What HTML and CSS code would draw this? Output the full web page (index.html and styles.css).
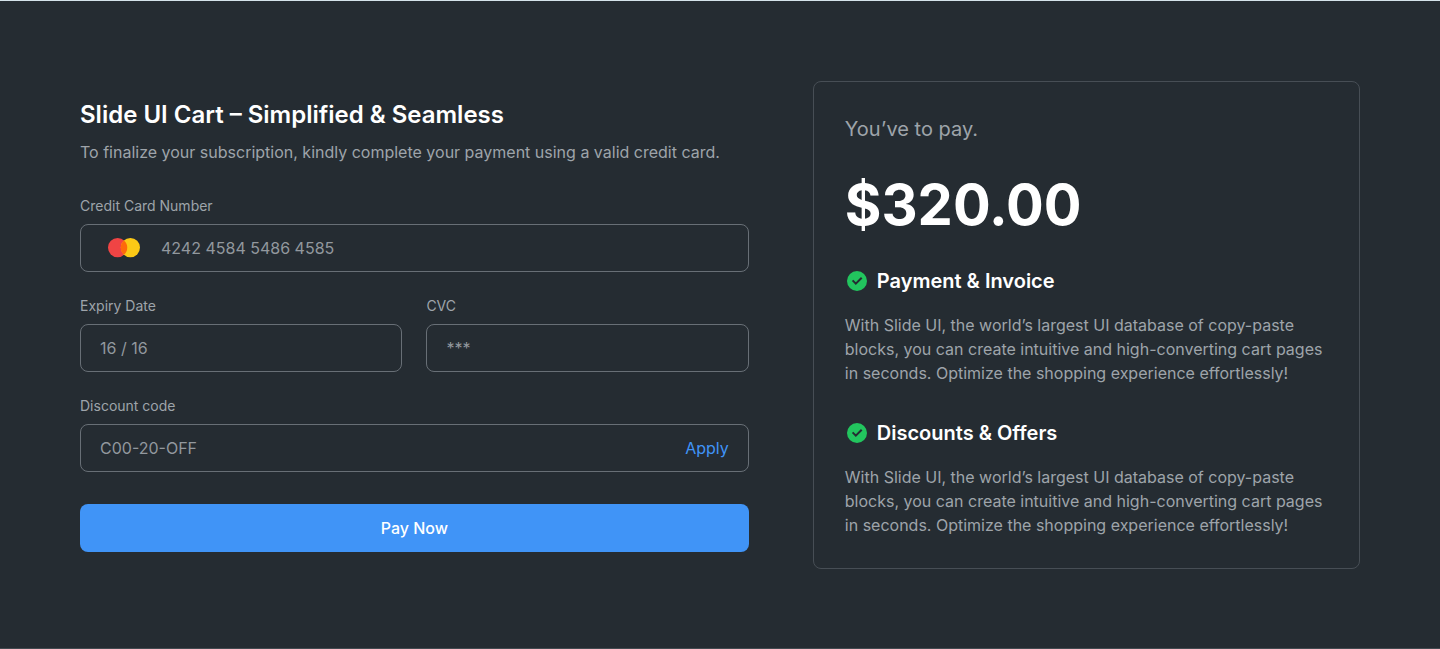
FILE: index.html
```html
<!DOCTYPE html>
<html lang="en">
<head>
<meta charset="utf-8">
<meta name="viewport" content="width=device-width, initial-scale=1">
<title>Slide UI Cart</title>
<link rel="stylesheet" href="styles.css">
</head>
<body>
<main class="checkout">
  <form class="payment">
    <h1 class="payment-title">Slide UI Cart – Simplified &amp; Seamless</h1>
    <p class="payment-intro">To finalize your subscription, kindly complete your payment using a valid credit card.</p>
    <div class="fields">
      <div class="field field-wide">
        <label class="label" for="card">Credit Card Number</label>
        <div class="control control-card">
          <svg class="brand" viewBox="0 0 32 20" aria-hidden="true">
            <circle cx="9.6" cy="9.6" r="9.6" fill="#f04444"/>
            <circle cx="22.4" cy="9.6" r="9.6" fill="#fcc916"/>
            <path d="M16 2.4a9.6 9.6 0 0 1 0 14.4a9.6 9.6 0 0 1 0-14.4z" fill="#ff6a0a"/>
          </svg>
          <input class="input" id="card" type="text" placeholder="4242 4584 5486 4585">
        </div>
      </div>
      <div class="field">
        <label class="label" for="expiry">Expiry Date</label>
        <div class="control"><input class="input" id="expiry" type="text" placeholder="16 / 16"></div>
      </div>
      <div class="field">
        <label class="label" for="cvc">CVC</label>
        <div class="control"><input class="input" id="cvc" type="text" placeholder="***"></div>
      </div>
      <div class="field field-wide">
        <label class="label" for="code">Discount code</label>
        <div class="control">
          <input class="input" id="code" type="text" placeholder="C00-20-OFF">
          <button class="apply" type="button">Apply</button>
        </div>
      </div>
    </div>
    <button class="pay" type="submit">Pay Now</button>
  </form>
  <aside class="summary">
    <p class="summary-lead">You’ve to pay.</p>
    <p class="amount">$320.00</p>
    <section class="benefit">
      <h2 class="benefit-title">
        <svg class="tick" viewBox="0 0 24 24" aria-hidden="true"><circle cx="12" cy="12" r="10" fill="#22c55e"/><path d="M7.6 11.4l3.2 3.2 5.9-5.9" fill="none" stroke="#252c32" stroke-width="2"/></svg>
        Payment &amp; Invoice
      </h2>
      <p class="benefit-text">With Slide UI, the world’s largest UI database of copy-paste blocks, you can create intuitive and high-converting cart pages in seconds. Optimize the shopping experience effortlessly!</p>
    </section>
    <section class="benefit">
      <h2 class="benefit-title">
        <svg class="tick" viewBox="0 0 24 24" aria-hidden="true"><circle cx="12" cy="12" r="10" fill="#22c55e"/><path d="M7.6 11.4l3.2 3.2 5.9-5.9" fill="none" stroke="#252c32" stroke-width="2"/></svg>
        Discounts &amp; Offers
      </h2>
      <p class="benefit-text">With Slide UI, the world’s largest UI database of copy-paste blocks, you can create intuitive and high-converting cart pages in seconds. Optimize the shopping experience effortlessly!</p>
    </section>
  </aside>
</main>
</body>
</html>
```
FILE: styles.css
```css
* {
  box-sizing: border-box;
  margin: 0;
}

body {
  min-height: 100vh;
  border-top: 1px solid #d5e3ea;
  border-bottom: 1px solid #434a50;
  background: #252c32;
  color: #fff;
  font-family: Inter, sans-serif;
  font-size: 16px;
  line-height: 24px;
}

.checkout {
  display: grid;
  grid-template-columns: 11fr 9fr;
  gap: 64px;
  align-items: center;
  padding: 80px 80px 79px;
}

.payment-title {
  font-size: 24px;
  font-weight: 600;
  line-height: 34px;
}

.payment-intro {
  margin-top: 8px;
  color: #9ea4aa;
}

.fields {
  display: grid;
  grid-template-columns: 1fr 1fr;
  gap: 24px;
  margin-top: 32px;
}

.field-wide {
  grid-column: 1 / -1;
}

.label {
  display: block;
  margin-bottom: 8px;
  color: #9ea4aa;
  font-size: 14px;
  line-height: 20px;
}

.control {
  display: flex;
  align-items: center;
  height: 48px;
  padding: 0 19px;
  border: 1px solid #686f76;
  border-radius: 8px;
}

.control-card {
  gap: 21px;
  padding-left: 27px;
}

.brand {
  flex: none;
  width: 32px;
  height: 20px;
}

.input {
  flex: 1;
  min-width: 0;
  padding: 0;
  border: 0;
  outline: 0;
  background: transparent;
  color: #fff;
  font: inherit;
}

.input::placeholder {
  color: #92989e;
  opacity: 1;
}

.apply {
  padding: 0;
  border: 0;
  background: none;
  color: #4094f7;
  font: inherit;
}

.pay {
  width: 100%;
  height: 48px;
  margin-top: 32px;
  border: 0;
  border-radius: 8px;
  background: #4094f7;
  color: #fff;
  font: inherit;
  font-weight: 500;
}

.summary {
  padding: 31px;
  border: 1px solid #474e55;
  border-radius: 8px;
}

.summary-lead {
  color: #9ea4aa;
  font-size: 20px;
  line-height: 32px;
}

.amount {
  margin-top: 24px;
  font-size: 56px;
  font-weight: 700;
  line-height: 72px;
}

.benefit {
  margin-top: 24px;
}

.benefit + .benefit {
  margin-top: 32px;
}

.benefit-title {
  display: flex;
  align-items: center;
  gap: 8px;
  font-size: 20px;
  font-weight: 600;
  line-height: 32px;
}

.tick {
  flex: none;
  width: 24px;
  height: 24px;
}

.benefit-text {
  margin-top: 16px;
  color: #9ea4aa;
}
```
